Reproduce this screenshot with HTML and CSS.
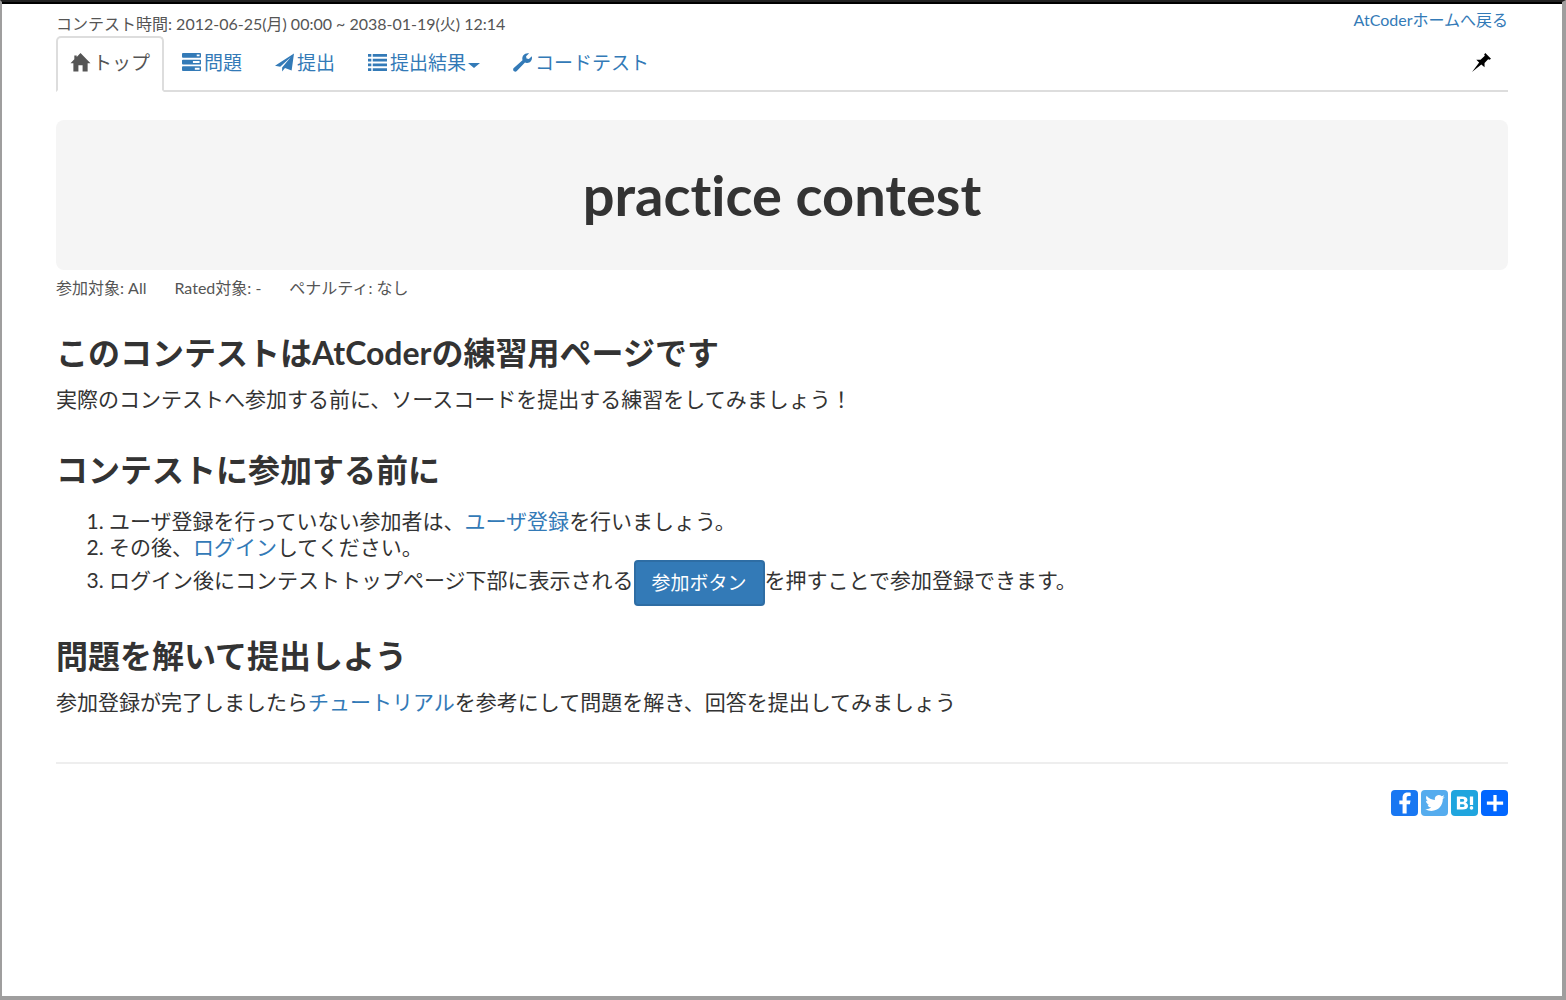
FILE: index.html
```html
<!DOCTYPE html>
<html lang="ja">
<head>
<meta charset="utf-8">
<meta name="viewport" content="width=device-width, initial-scale=1">
<title>practice contest - AtCoder</title>
<link rel="stylesheet" href="styles.css">
</head>
<body>
<div class="container">
  <header class="topbar">
    <small class="contest-duration">コンテスト時間: 2012-06-25(月) 00:00 ~ 2038-01-19(火) 12:14</small>
    <a class="back-home" href="#">AtCoderホームへ戻る</a>
  </header>

  <nav class="tabs">
    <a class="tab active" href="#">
      <svg class="icon" viewBox="0 0 20 20"><path d="M10 0 20.500 10.800H17.500V19.500H12.200V13H7.800V19.500H2.500V10.800H-.5L3.500 6.600V2.500H6V4.100Z"/></svg>
      <span>トップ</span>
    </a>
    <a class="tab" href="#">
      <svg class="icon" viewBox="0 0 20 20"><path fill-rule="evenodd" d="M1 0H19Q20 0 20 1V4Q20 5 19 5H1Q0 5 0 4V1Q0 0 1 0ZM15.500 1.500V3.500H18.500V1.500ZM1 7H19Q20 7 20 8V11Q20 12 19 12H1Q0 12 0 11V8Q0 7 1 7ZM11.500 8.500V10.500H18.500V8.500ZM1 14H19Q20 14 20 15V18Q20 19 19 19H1Q0 19 0 18V15Q0 14 1 14ZM13.500 15.500V17.500H18.500V15.500Z"/></svg>
      <span>問題</span>
    </a>
    <a class="tab" href="#">
      <svg class="icon" viewBox="0 0 20 20"><path d="M20 .5 0 13.500 5.500 14.500 16.500 4.500 7.500 15.200V19.500L10.500 15.800 17.500 18.500Z"/></svg>
      <span>提出</span>
    </a>
    <a class="tab" href="#">
      <svg class="icon" viewBox="0 0 20 20"><path d="M0 1H3.500V4H0ZM5 1H20V4H5ZM0 6H3.500V9H0ZM5 6H20V9H5ZM0 11H3.500V14H0ZM5 11H20V14H5ZM0 16H3.500V19H0ZM5 16H20V19H5Z"/></svg>
      <span>提出結果</span><i class="caret"></i>
    </a>
    <a class="tab" href="#">
      <svg class="icon" viewBox="0 0 20 20"><path d="M17 .3 13.800 3.300 14.200 5.800 16.700 6.300 19.800 3.300C20.800 7.500 18 10.600 14.500 10.400L12.600 10 4 19C1.800 21-1.200 18 .8 15.800L10 7.500C8.800 3 12.500-.6 17 .3Z"/></svg>
      <span>コードテスト</span>
    </a>
    <button class="pin" type="button" aria-label="固定">
      <svg class="icon" viewBox="0 0 20 20"><path d="M14 0 20 6 18.500 7.200 17 6.500 13.200 10.500V15L9.800 12 0 20 7.500 10 4.500 7H9L13.500 3 12.800 1.500Z"/></svg>
    </button>
  </nav>

  <main>
    <div class="banner"><h1>practice contest</h1></div>
    <div class="contest-info">
      <span>参加対象: All</span>
      <span>Rated対象: -</span>
      <span>ペナルティ: なし</span>
    </div>

    <section>
      <h2>このコンテストはAtCoderの練習用ページです</h2>
      <p>実際のコンテストへ参加する前に、ソースコードを提出する練習をしてみましょう！</p>
    </section>
    <section>
      <h2>コンテストに参加する前に</h2>
      <ol>
        <li>ユーザ登録を行っていない参加者は、<a href="#">ユーザ登録</a>を行いましょう。</li>
        <li>その後、<a href="#">ログイン</a>してください。</li>
        <li>ログイン後にコンテストトップページ下部に表示される<button class="join" type="button">参加ボタン</button>を押すことで参加登録できます。</li>
      </ol>
    </section>
    <section>
      <h2>問題を解いて提出しよう</h2>
      <p>参加登録が完了しましたら<a href="#">チュートリアル</a>を参考にして問題を解き、回答を提出してみましょう</p>
    </section>
  </main>

  <hr>
  <footer class="share">
    <a class="share-link facebook" href="#" aria-label="Facebook"><svg viewBox="0 0 32 32"><path d="M13 29V17.500H9V13H13V9.500C13 5.200 15.500 3 19.400 3 21 3 22.500 3.200 23 3.300V7.500H20.500C18.500 7.500 18 8.500 18 10V13H22.800L22 17.500H18V29Z"/></svg></a>
    <a class="share-link twitter" href="#" aria-label="Twitter"><svg viewBox="0 0 32 32"><path d="M28 8.557a10 10 0 0 1-2.828.775 4.930 4.930 0 0 0 2.166-2.725 9.700 9.700 0 0 1-3.130 1.194 4.920 4.920 0 0 0-3.593-1.550 4.924 4.924 0 0 0-4.794 6.049c-4.090-.210-7.720-2.170-10.150-5.150a4.940 4.940 0 0 0-.665 2.477c0 1.710.870 3.214 2.190 4.100a5 5 0 0 1-2.230-.616v.060c0 2.390 1.700 4.380 3.952 4.830-.414.115-.850.174-1.297.174q-.476-.001-.928-.090a4.935 4.935 0 0 0 4.600 3.420 9.900 9.900 0 0 1-6.114 2.107q-.597 0-1.175-.067a13.950 13.950 0 0 0 7.550 2.213c9.056 0 14.010-7.507 14.010-14.013q0-.320-.015-.637c.960-.695 1.795-1.560 2.455-2.550z"/></svg></a>
    <a class="share-link hatena" href="#" aria-label="はてなブックマーク"><svg viewBox="0 0 32 32"><path fill-rule="evenodd" d="M6 8H12.500C17 8 19 9.700 19 12.300 19 14.200 17.800 15.300 16.200 15.700 18.300 16 19.700 17.500 19.700 19.600 19.700 22.700 17.200 24 13 24H6ZM10 11.200V14.500H12C14 14.500 15 14 15 12.800S14 11.200 12.500 11.200ZM10 17.400V20.900H12.500C14.500 20.900 15.500 20.400 15.500 19.100S14.400 17.400 12.500 17.400ZM22 8H26V18.500H22Z"/><circle cx="24" cy="22" r="2.200"/></svg></a>
    <a class="share-link more" href="#" aria-label="共有"><svg viewBox="0 0 32 32"><path d="M14 6H18V14H26V18H18V26H14V18H6V14H14Z"/></svg></a>
  </footer>
</div>
</body>
</html>
```
FILE: styles.css
```css
* {
  box-sizing: border-box;
}

body {
  margin: 0;
  min-height: 100vh;
  border: solid #9f9e9e;
  border-width: 2px 4px 4px 2px;
  border-top-color: #222;
  background: #fff;
  color: #333;
  font-family: Lato, "Noto Sans CJK JP", sans-serif;
  font-size: 21px;
  font-variant-ligatures: none;
  line-height: 26px;
}

a {
  color: #337ab7;
  text-decoration: none;
}

.container {
  padding: 0 54px;
  border-top: 2px solid #000;
}

.topbar {
  display: flex;
  justify-content: space-between;
  align-items: flex-start;
  height: 32px;
  font-size: 16px;
  line-height: 32px;
}

.contest-duration {
  padding-top: 4px;
  font-size: 16px;
  color: #555;
}

.tabs {
  display: flex;
  gap: 3px;
  height: 56px;
  border-bottom: 2px solid #ddd;
  font-size: 19px;
  line-height: 24px;
}

.tab {
  display: flex;
  align-items: center;
  gap: 3px;
  height: 56px;
  padding: 0 13px 3px;
  border: 2px solid transparent;
  border-radius: 5px 5px 0 0;
}

.tab.active {
  padding-right: 12px;
  border-color: #ddd;
  border-bottom-color: #fff;
  background: #fff;
  color: #555;
}

.icon {
  width: 19px;
  height: 19px;
  fill: currentColor;
  overflow: visible;
}

.caret {
  margin-top: 6px;
  border: 6px solid transparent;
  border-top: 5px solid;
  border-bottom: 0;
  margin-left: -1px;
}

.pin {
  display: flex;
  align-items: center;
  margin-left: auto;
  padding: 0 17px 2px;
  border: 0;
  background: none;
  color: #000;
}

.banner {
  margin-top: 28px;
  padding: 40px;
  border-radius: 8px;
  background: #f5f5f5;
  text-align: center;
}

h1 {
  margin: 0;
  font-size: 56px;
  line-height: 70px;
}

.contest-info {
  display: flex;
  gap: 28px;
  height: 36px;
  font-size: 16px;
  line-height: 36px;
  color: #555;
}

section {
  padding-top: 27px;
}

h2 {
  margin: 0;
  font-size: 32px;
  line-height: 40px;
}

p {
  margin: 13px 0 11px;
}

ol {
  margin: 18px 0 3px;
  padding-left: 53px;
}

.join {
  height: 46px;
  padding: 0 16px;
  border: 2px solid #2e6da4;
  border-radius: 4px;
  background: #337ab7;
  color: #fff;
  font: inherit;
  font-size: 19px;
  vertical-align: middle;
}

hr {
  margin: 47px 0 26px;
  border: 0;
  border-top: 2px solid #eee;
}

.share {
  display: flex;
  justify-content: flex-end;
  gap: 3px;
}

.share-link {
  display: flex;
  justify-content: center;
  width: 27px;
  height: 26px;
  border-radius: 4px;
}

.share-link svg {
  width: 26px;
  height: 26px;
  fill: #fff;
}

.facebook {
  background: #1877f2;
}

.twitter {
  background: #55acee;
}

.hatena {
  background: #1fa5de;
}

.more {
  background: #0166ff;
}
```
